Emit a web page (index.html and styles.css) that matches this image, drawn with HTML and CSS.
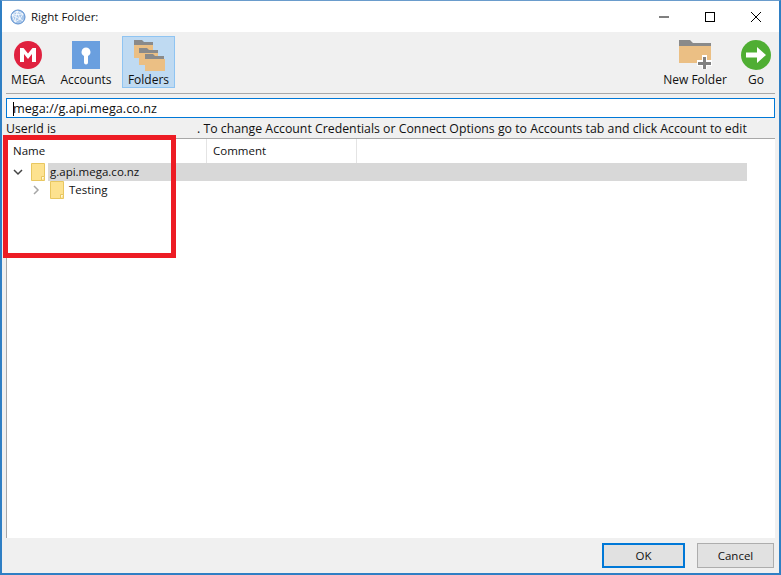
FILE: index.html
```html
<!DOCTYPE html>
<html lang="en">
<head>
<meta charset="utf-8">
<title>Right Folder:</title>
<link rel="stylesheet" href="styles.css">
</head>
<body>
<div class="window">
  <header class="titlebar">
    <svg class="app-icon" width="16" height="16" viewBox="0 0 16 16">
      <circle cx="8" cy="8" r="7" fill="#a9c7ea" stroke="#5b8fcf"/>
      <path d="M2 6l5-4 6 3-3 5-5 3-3-7zM7 2l-2 11M13 5l-11 1M10 10l-8-4M7 2l3 8M10 10l3 2" fill="none" stroke="#fff" stroke-width=".8"/>
    </svg>
    <span class="title">Right Folder:</span>
    <div class="win-controls">
      <svg width="46" height="32" viewBox="0 0 46 32"><path d="M18 16h10" stroke="#000"/></svg>
      <svg width="46" height="32" viewBox="0 0 46 32"><rect x="18.5" y="11.5" width="9" height="9" fill="none" stroke="#000"/></svg>
      <svg width="46" height="32" viewBox="0 0 46 32"><path d="M18 11l10 10M28 11l-10 10" stroke="#000" fill="none"/></svg>
    </div>
  </header>

  <nav class="toolbar">
    <div class="tool tool-mega">
      <svg width="28" height="28" viewBox="0 0 28 28">
        <circle cx="14" cy="14" r="14" fill="#e0213f"/>
        <path d="M6 21V7h3.500L14 12.500 18.500 7H22v14h-4v-8l-4 5-4-5v8z" fill="#fff"/>
      </svg>
      <span>MEGA</span>
    </div>
    <div class="tool tool-accounts">
      <svg width="28" height="28" viewBox="0 0 28 28">
        <rect width="28" height="28" fill="#6a9fdf"/>
        <path d="M14 6.500a4.500 4.500 0 0 1 2 8.500v6.500a2 2 0 0 1-4 0V15a4.500 4.500 0 0 1 2-8.500z" fill="#fff"/>
      </svg>
      <span>Accounts</span>
    </div>
    <div class="tool tool-folders">
      <svg width="34" height="34" viewBox="0 0 34 34">
        <path d="M2 2h8l2 2h9v3H2z" fill="#8a8a8a"/><rect x="2" y="7" width="19" height="13" fill="#ebbf84"/>
        <path d="M7 10h8l2 2h9v3H7z" fill="#8a8a8a"/><rect x="7" y="15" width="19" height="12" fill="#ebbf84"/>
        <path d="M13 16h8l2 2h9v3H13z" fill="#8a8a8a"/><rect x="13" y="21" width="20" height="12" fill="#ebbf84"/>
      </svg>
      <span>Folders</span>
    </div>
    <div class="tool-spacer"></div>
    <div class="tool tool-new">
      <svg width="34" height="30" viewBox="0 0 34 30">
        <path d="M1 1h11l3 3h18v4H1z" fill="#8a8a8a"/>
        <path d="M1 7h32v17H1z" fill="#ebbf84"/>
        <path d="M20 28v-6h5v-5h5v5h5v6h-5v3h-5v-3z" fill="#fff" transform="translate(-1 -1)"/>
        <path d="M25 18h3v5h5v3h-5v4h-3v-4h-5v-3h5z" fill="#808080"/>
      </svg>
      <span>New Folder</span>
    </div>
    <div class="tool tool-go">
      <svg width="30" height="30" viewBox="0 0 30 30">
        <circle cx="15" cy="15" r="15" fill="#4fae33"/>
        <path d="M5 12.500h11V7l9 8-9 8v-5.500H5z" fill="#fff"/>
      </svg>
      <span>Go</span>
    </div>
  </nav>

  <div class="address"><span class="caret"></span>mega://g.api.mega.co.nz</div>

  <div class="status">
    <span class="user">UserId is</span>
    <span class="hint">. To change Account Credentials or Connect Options go to Accounts tab and click Account to edit</span>
  </div>

  <main class="tree">
    <div class="tree-head">
      <div class="col col-name">Name</div>
      <div class="col col-comment">Comment</div>
    </div>
    <div class="row row-root">
      <svg class="chev" width="10" height="10" viewBox="0 0 10 10"><path d="M1 3l4 4 4-4" fill="none" stroke="#444" stroke-width="1.500"/></svg>
      <svg class="folder" width="14" height="18" viewBox="0 0 14 18"><path d="M.5.5h13v17H.5z" fill="#fde28f" stroke="#e8c760"/><path d="M10.500 17.500v-4h3" fill="#fff8d8" stroke="#e8c760"/></svg>
      <span class="row-label">g.api.mega.co.nz</span>
    </div>
    <div class="row row-child">
      <svg class="chev" width="10" height="10" viewBox="0 0 10 10"><path d="M3 1l4 4-4 4" fill="none" stroke="#a6a6a6" stroke-width="1.500"/></svg>
      <svg class="folder" width="14" height="18" viewBox="0 0 14 18"><path d="M.5.5h13v17H.5z" fill="#fde28f" stroke="#e8c760"/><path d="M10.500 17.500v-4h3" fill="#fff8d8" stroke="#e8c760"/></svg>
      <span class="row-label-child">Testing</span>
    </div>
  </main>

  <footer class="buttons">
    <button class="btn btn-default">OK</button>
    <button class="btn">Cancel</button>
  </footer>

  <div class="annotation"></div>
</div>
</body>
</html>
```
FILE: styles.css
```css
* { box-sizing: border-box; }
html, body { margin: 0; padding: 0; }
body { width: 781px; height: 575px; overflow: hidden; background: #fff; }
.window {
  position: relative;
  width: 781px; height: 575px;
  display: flex; flex-direction: column;
  background: #f0f0f0;
  border-left: 2px solid #2f7fc4;
  border-right: 2px solid #2f7fc4;
  border-bottom: 2px solid #2f7fc4;
  border-top: 1px solid #6a9ccc;
  font: 12px "Open Sans", "Liberation Sans", sans-serif;
  color: #111;
}
.titlebar { height: 31px; flex: none; background: #fff; display: flex; align-items: center; padding-left: 8px; }
.app-icon { margin-right: 5px; }
.title { font-size: 11.500px; }
.win-controls { margin-left: auto; display: flex; }
.win-controls svg { display: block; }
.toolbar { height: 62px; flex: none; display: flex; margin: 0 4px 0 4px; border-bottom: 1px solid #a8a8a8; padding-top: 4px; align-items: flex-start; }
.tool { display: flex; flex-direction: column; align-items: center; height: 52px; font-size: 12px; white-space: nowrap; }
.tool span { line-height: 16px; }
.tool svg { display: block; flex: none; }
.tool-mega { width: 44px; padding-top: 5px; }
.tool-mega span { margin-top: 3px; }
.tool-accounts { width: 62px; margin-left: 5px; padding-top: 5px; }
.tool-accounts span { margin-top: 3px; }
.tool-folders { width: 53px; margin-left: 5px; background: #bfdaf2; border: 1px solid #8fc4f2; padding-top: 1px; }
.tool-folders span { margin-top: 0; }
.tool-spacer { flex: 1; }
.tool-new { width: 74px; padding-top: 3px; }
.tool-new span { margin-top: 3px; }
.tool-go { width: 30px; margin-left: 9px; margin-right: 4px; padding-top: 4px; }
.tool-go span { margin-top: 2px; }
.address {
  height: 20px; flex: none; margin: 4px 4px 0 4px;
  background: #fff; border: 1px solid #0078d7;
  padding-left: 6px; line-height: 18px; font-size: 12.700px; position: relative;
}
.caret { display: inline-block; width: 1px; height: 14px; background: #000; vertical-align: -3px; margin-right: -1px; }
.status { height: 20px; flex: none; display: flex; margin: 1px 4px 0; line-height: 20px; font-size: 12.300px; border-bottom: 1px solid #a8a8a8; }
.user { width: 191px; }
.hint { white-space: nowrap; }
.tree { flex: 1; background: #fff; margin-left: 4px; margin-right: 4px; border-left: 1px solid #a8a8a8; }
.tree-head { display: flex; height: 24px; line-height: 24px; font-size: 11.500px; }
.col { padding-left: 6px; border-right: 1px solid #e4e4e4; }
.col-name { width: 200px; }
.col-comment { width: 150px; }
.row { height: 18px; display: flex; align-items: center; font-size: 11.500px; }
.row span { margin-top: -2px; }
.row-root { background: linear-gradient(90deg, #fff 0 41px, #d8d8d8 41px); margin-right: 28px; padding-left: 6px; }
.row-child { padding-left: 24px; }
.chev { flex: none; }
.folder { flex: none; }
.row-root .folder { margin-left: 8px; }
.row-child .folder { margin-left: 9px; }
.row-label { margin-left: 5px; }
.row-label-child { margin-left: 5px; }
.buttons { height: 35px; flex: none; display: flex; justify-content: flex-end; gap: 12px; padding: 5px 5px 0 0; }
.btn { height: 25px; background: #e1e1e1; border: 1px solid #adadad; font: 11.500px "Open Sans", "Liberation Sans", sans-serif; color: #111; padding: 0; width: 77px; }
.btn-default { width: 83px; border: 2px solid #0078d7; }
.annotation { position: absolute; left: 1px; top: 134px; width: 173px; height: 123px; border: 5px solid #ed1c24; pointer-events: none; }
```
